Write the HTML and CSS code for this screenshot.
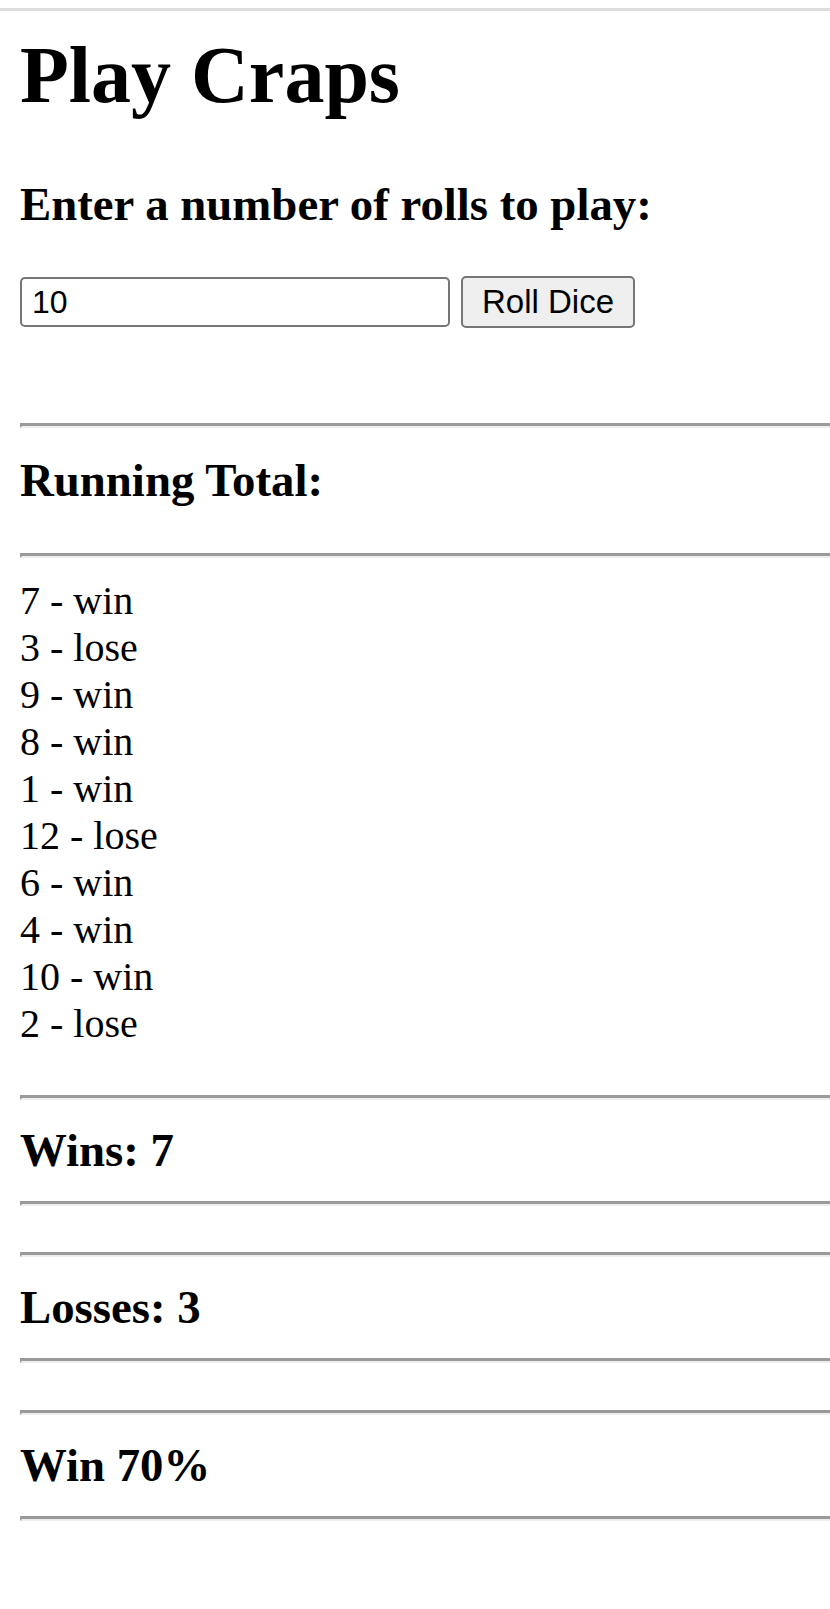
FILE: index.html
```html
<!DOCTYPE html>
<html lang="en">
<head>
<meta charset="utf-8">
<title>Play Craps</title>
<link rel="stylesheet" href="styles.css">
</head>
<body>
<div class="topbar"></div>
<main class="page">
  <h1 class="title">Play Craps</h1>
  <h3 class="prompt">Enter a number of rolls to play:</h3>
  <form class="roll-form">
    <input class="rolls-input" type="text" value="10">
    <button class="roll-btn" type="button">Roll Dice</button>
  </form>
  <hr class="rule rule-first">
  <h3 class="section-title running">Running Total:</h3>
  <hr class="rule">
  <div class="rolls">
    <div class="roll">7 - win</div>
    <div class="roll">3 - lose</div>
    <div class="roll">9 - win</div>
    <div class="roll">8 - win</div>
    <div class="roll">1 - win</div>
    <div class="roll">12 - lose</div>
    <div class="roll">6 - win</div>
    <div class="roll">4 - win</div>
    <div class="roll">10 - win</div>
    <div class="roll">2 - lose</div>
  </div>
  <div class="stats">
    <div class="stat">
      <hr class="rule">
      <h3 class="stat-title">Wins: 7</h3>
      <hr class="rule">
    </div>
    <div class="stat">
      <hr class="rule">
      <h3 class="stat-title">Losses: 3</h3>
      <hr class="rule">
    </div>
    <div class="stat">
      <hr class="rule">
      <h3 class="stat-title">Win 70%</h3>
      <hr class="rule">
    </div>
  </div>
</main>
</body>
</html>
```
FILE: styles.css
```css
html, body {
  margin: 0;
  padding: 0;
  background: #ffffff;
}

body {
  font-family: "Liberation Serif", "Times New Roman", serif;
  color: #000000;
  overflow: hidden;
}

.topbar {
  margin-top: 8px;
  height: 3px;
  background: #dddddd;
}

.page {
  padding: 0 0 0 20px;
}

.title {
  margin: 18px 0 0 0;
  font-size: 80px;
  line-height: 92px;
  font-weight: bold;
}

.prompt {
  margin: 56px 0 0 0;
  font-size: 46.8px;
  line-height: 54px;
  font-weight: bold;
}

.roll-form {
  margin: 45px 0 0 0;
  display: flex;
  align-items: center;
  gap: 11px;
  height: 52px;
}

.rolls-input {
  box-sizing: border-box;
  width: 430px;
  height: 50px;
  margin: 0;
  padding: 0 10px;
  border: 2px solid #767676;
  border-radius: 5px;
  background: #ffffff;
  font-family: "Liberation Sans", Arial, sans-serif;
  font-size: 32px;
  color: #000000;
}

.roll-btn {
  box-sizing: border-box;
  height: 52px;
  margin: 0;
  padding: 0 19px;
  border: 2px solid #767676;
  border-radius: 5px;
  background: #efefef;
  font-family: "Liberation Sans", Arial, sans-serif;
  font-size: 33px;
  color: #000000;
}

.rule {
  height: 0;
  margin: 0;
  border: 0;
  border-top: 3px solid #9a9a9a;
  border-bottom: 2px solid #eeeeee;
  border-left: 2px solid #9a9a9a;
}

.rule-first {
  margin-top: 95px;
}

.section-title {
  font-size: 46.8px;
  line-height: 54px;
  font-weight: bold;
}

.running {
  margin: 25px 0 45.5px 0;
}

.rolls {
  margin: 19px 0 0 0;
  font-size: 40px;
  line-height: 47px;
}

.stats {
  margin-top: 48px;
  display: flex;
  flex-direction: column;
  gap: 46.7px;
}

.stat-title {
  margin: 23px 0 24px 0;
  font-size: 46.8px;
  line-height: 54px;
  font-weight: bold;
}
```
